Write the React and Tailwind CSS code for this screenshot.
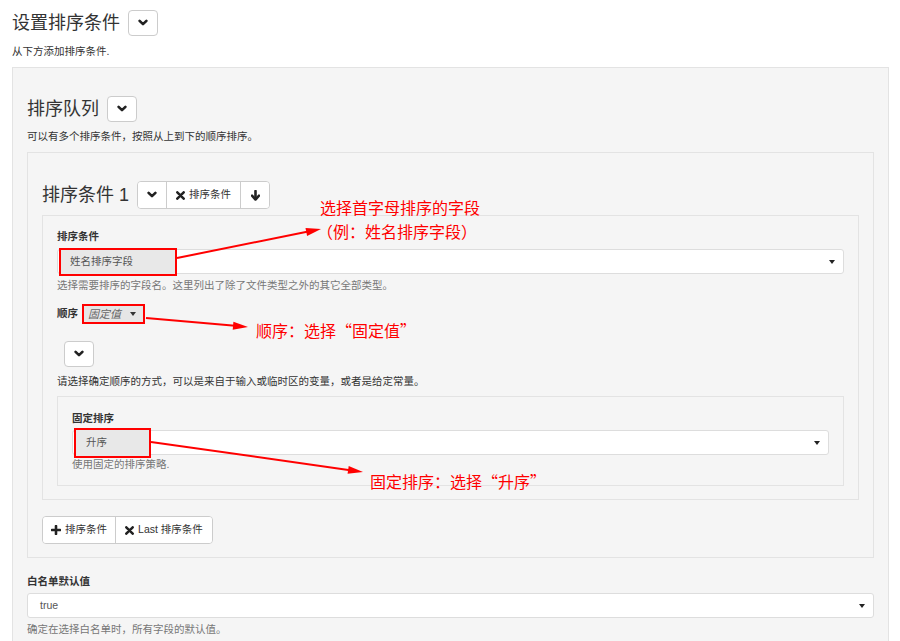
import React from "react";

const Caret = () => (
  <svg width="6" height="5" viewBox="0 0 6 5" className="absolute right-[8px] top-1/2 -translate-y-1/2">
    <path d="M0 0.5 H6 L3 4.5 Z" fill="#222" />
  </svg>
);

const IconChevron = () => (
  <svg width="10" height="8" viewBox="0 0 10 8">
    <polyline points="1.6,1.8 5,5.2 8.4,1.8" fill="none" stroke="#222" strokeWidth="2.6" strokeLinecap="round" strokeLinejoin="round" />
  </svg>
);

const IconTimes = () => (
  <svg width="9" height="9" viewBox="0 0 9 9">
    <path d="M1.3 1.3 L7.7 7.7 M7.7 1.3 L1.3 7.7" stroke="#222" strokeWidth="2.5" strokeLinecap="round" />
  </svg>
);

const IconArrowDown = () => (
  <svg width="9" height="11" viewBox="0 0 9 11">
    <path d="M4.5 1 V8" stroke="#222" strokeWidth="2.6" strokeLinecap="round" />
    <path d="M1 5.6 L4.5 9.6 L8 5.6" fill="none" stroke="#222" strokeWidth="2.4" strokeLinecap="round" strokeLinejoin="round" />
  </svg>
);

const IconPlus = () => (
  <svg width="10" height="10" viewBox="0 0 10 10">
    <path d="M5 1 V9 M1 5 H9" stroke="#222" strokeWidth="2.6" strokeLinecap="round" />
  </svg>
);

const Btn = ({ children, className = "" }) => (
  <div className={"h-[26px] flex items-center justify-center bg-white text-[#333] text-[10.5px] " + className}>
    {children}
  </div>
);

const ChevronBtn = () => (
  <div className="w-[30px] h-[26px] flex items-center justify-center bg-white border border-[#ccc] rounded-[4px]">
    <IconChevron />
  </div>
);

const Select = ({ children }) => (
  <div className="relative h-[25px] border border-[#ddd] rounded-[3px] bg-white flex items-center text-[10.5px] text-[#555]">
    {children}
    <Caret />
  </div>
);

const Label = ({ children }) => (
  <div className="text-[10.5px] leading-[17px] font-bold text-[#333]">{children}</div>
);

const Help = ({ children, className = "" }) => (
  <div className={"text-[10.5px] leading-[17px] text-[#777] " + className}>{children}</div>
);

const Arrow = ({ x1, y1, x2, y2 }) => {
  const dx = x2 - x1;
  const dy = y2 - y1;
  const len = Math.sqrt(dx * dx + dy * dy);
  const ux = dx / len;
  const uy = dy / len;
  const L = 15;
  const W = 4;
  const bx = x2 - ux * L;
  const by = y2 - uy * L;
  const p1 = `${bx - uy * W},${by + ux * W}`;
  const p2 = `${bx + uy * W},${by - ux * W}`;
  return (
    <g>
      <line x1={x1} y1={y1} x2={bx + ux * 2} y2={by + uy * 2} stroke="#f00" strokeWidth="2" />
      <polygon points={`${x2},${y2} ${p1} ${p2}`} fill="#f00" />
    </g>
  );
};

export default function App() {
  return (
    <div className="relative w-[900px] h-[641px] overflow-hidden bg-white font-['Liberation_Sans','Noto_Sans_CJK_SC',sans-serif] text-[#333]">
      <div className="pt-[10px] pl-[12px] pr-[11px]">
        {/* Title */}
        <div className="h-[26px] flex items-center gap-[8px]">
          <div className="text-[18px] leading-none">设置排序条件</div>
          <ChevronBtn />
        </div>
        <div className="mt-[7px] text-[10.5px] leading-[17px]">从下方添加排序条件.</div>

        {/* Panel 1 */}
        <div className="mt-[7px] border border-[#e3e3e3] bg-[#f5f5f5] px-[14px] pt-[28px] pb-[40px]">
          <div className="h-[26px] flex items-center gap-[8px]">
            <div className="text-[18px] leading-none">排序队列</div>
            <ChevronBtn />
          </div>
          <div className="mt-[6px] text-[10.5px] leading-[17px]">可以有多个排序条件，按照从上到下的顺序排序。</div>

          {/* Panel 2 */}
          <div className="mt-[7px] border border-[#e3e3e3] bg-[#f5f5f5] px-[14px] pt-[29px] pb-[13px]">
            <div className="h-[26px] flex items-center gap-[8px]">
              <div className="text-[18px] leading-none">排序条件 1</div>
              <div className="flex border border-[#ccc] rounded-[4px] overflow-hidden">
                <Btn className="w-[29px] border-r border-[#ccc]">
                  <IconChevron />
                </Btn>
                <Btn className="w-[74px] border-r border-[#ccc] gap-[4px]">
                  <IconTimes />
                  <span>排序条件</span>
                </Btn>
                <Btn className="w-[28px]">
                  <IconArrowDown />
                </Btn>
              </div>
            </div>

            {/* Panel 3 */}
            <div className="mt-[7px] border border-[#e3e3e3] bg-[#f5f5f5] px-[14px] pt-[12px] pb-[13px]">
              <Label>排序条件</Label>
              <div className="mt-[4px]">
                <Select>
                  <div className="ml-[1px] h-[28px] w-[118px] shrink-0 border-2 border-[#f00] bg-[#e8e8e8] flex items-center pl-[9px]">
                    姓名排序字段
                  </div>
                </Select>
              </div>
              <Help className="mt-[3px]">选择需要排序的字段名。这里列出了除了文件类型之外的其它全部类型。</Help>

              <div className="mt-[10px] h-[20px] flex items-center gap-[4px]">
                <span className="text-[10.5px] font-bold">顺序</span>
                <div className="relative h-[20px] w-[63px] border-2 border-[#f00] bg-[#e6e6e6] flex items-center pl-[4px] text-[11px] italic text-[#666]">
                  固定值
                  <svg width="6" height="5" viewBox="0 0 6 5" className="absolute right-[7px] top-1/2 -translate-y-1/2">
                    <path d="M0 0.5 H6 L3 4.5 Z" fill="#333" />
                  </svg>
                </div>
              </div>

              <div className="mt-[17px] ml-[7px]">
                <ChevronBtn />
              </div>
              <div className="mt-[6px] text-[10.5px] leading-[17px]">请选择确定顺序的方式，可以是来自于输入或临时区的变量，或者是给定常量。</div>

              {/* Panel 4 */}
              <div className="mt-[6px] border border-[#e3e3e3] bg-[#f5f5f5] px-[14px] pt-[13px] pb-[12px]">
                <Label>固定排序</Label>
                <div className="mt-[3px]">
                  <Select>
                    <div className="ml-[1px] h-[30px] w-[77px] shrink-0 border-2 border-[#f00] bg-[#e8e8e8] flex items-center pl-[10px]">
                      升序
                    </div>
                  </Select>
                </div>
                <Help className="mt-[1px]">使用固定的排序策略.</Help>
              </div>
            </div>

            <div className="mt-[16px] flex">
              <div className="flex border border-[#ccc] rounded-[4px] overflow-hidden">
                <Btn className="w-[73px] border-r border-[#ccc] gap-[4px]">
                  <IconPlus />
                  <span>排序条件</span>
                </Btn>
                <Btn className="w-[96px] gap-[4px]">
                  <IconTimes />
                  <span>Last 排序条件</span>
                </Btn>
              </div>
            </div>
          </div>

          <div className="mt-[15px]">
            <Label>白名单默认值</Label>
          </div>
          <div className="mt-[3px]">
            <Select>
              <span className="pl-[12px]">true</span>
            </Select>
          </div>
          <Help className="mt-[3px]">确定在选择白名单时，所有字段的默认值。</Help>
        </div>
      </div>

      {/* Annotations */}
      <svg className="absolute left-0 top-0 pointer-events-none" width="900" height="641">
        <Arrow x1={177} y1={258} x2={321} y2={229} />
        <Arrow x1={146} y1={318} x2={248} y2={327} />
        <Arrow x1={151} y1={442} x2={363} y2={472} />
      </svg>
      <div className="absolute left-[320px] top-[195px] text-[16px] leading-[24px] text-[#f00] font-['Noto_Sans_CJK_SC',sans-serif]">
        <div>选择首字母排序的字段</div>
        <div className="-ml-[3px]">（例：姓名排序字段）</div>
      </div>
      <div className="absolute left-[256px] top-[318px] text-[16px] leading-[24px] text-[#f00] font-['Noto_Sans_CJK_SC',sans-serif]">
        顺序：选择“固定值”
      </div>
      <div className="absolute left-[370px] top-[469px] text-[16px] leading-[24px] text-[#f00] font-['Noto_Sans_CJK_SC',sans-serif]">
        固定排序：选择“升序”
      </div>
    </div>
  );
}
